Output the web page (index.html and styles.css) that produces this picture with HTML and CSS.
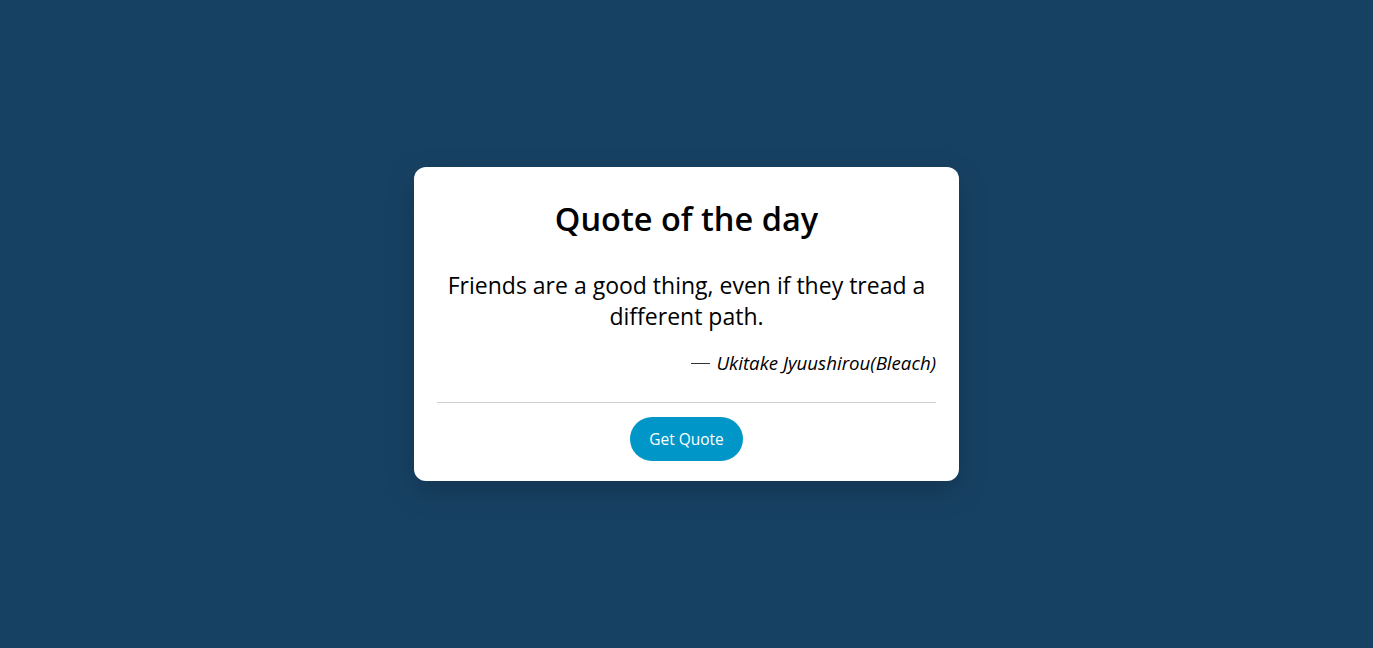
FILE: index.html
```html
<!DOCTYPE html>
<html lang="en">
<head>
<meta charset="utf-8">
<title>Quote of the day</title>
<link rel="stylesheet" href="styles.css">
</head>
<body>
<main class="page">
  <section class="card">
    <h1 class="title">Quote of the day</h1>
    <p class="quote">Friends are a good thing, even if they tread a different path.</p>
    <p class="author"><span class="dash"></span>Ukitake Jyuushirou(Bleach)</p>
    <hr class="rule">
    <div class="actions">
      <button class="btn" type="button">Get Quote</button>
    </div>
  </section>
</main>
</body>
</html>
```

FILE: styles.css
```css
* { box-sizing: border-box; }
html, body { margin: 0; height: 100%; }
body {
  background: #174163;
  font-family: "Open Sans", "DejaVu Sans", sans-serif;
  color: #000;
}
.page {
  min-height: 648px;
  display: flex;
  align-items: center;
  justify-content: center;
}
.card {
  width: 545px;
  background: #fff;
  border-radius: 12px;
  padding: 31px 23px 20px;
  box-shadow: 0 10px 30px rgba(0, 0, 0, 0.18);
}
.title {
  margin: 0;
  text-align: center;
  font-size: 32.5px;
  font-weight: 600;
  line-height: 42px;
}
.quote {
  margin: 30px 0 0;
  text-align: center;
  font-size: 23px;
  line-height: 31px;
}
.author {
  margin: 17px 0 0;
  display: flex;
  justify-content: flex-end;
  align-items: center;
  font-style: italic;
  font-size: 18.7px;
  line-height: 28px;
}
.dash {
  display: inline-block;
  width: 19px;
  height: 1px;
  background: #333;
  margin-right: 6px;
}
.rule {
  margin: 25px 0 0;
  border: 0;
  border-top: 1px solid #cfcfcf;
}
.actions {
  display: flex;
  justify-content: center;
  margin-top: 14px;
}
.btn {
  width: 113px;
  height: 44px;
  border: 0;
  border-radius: 22px;
  background: #0096c7;
  color: #fff;
  font-family: inherit;
  font-size: 15.5px;
}
```
